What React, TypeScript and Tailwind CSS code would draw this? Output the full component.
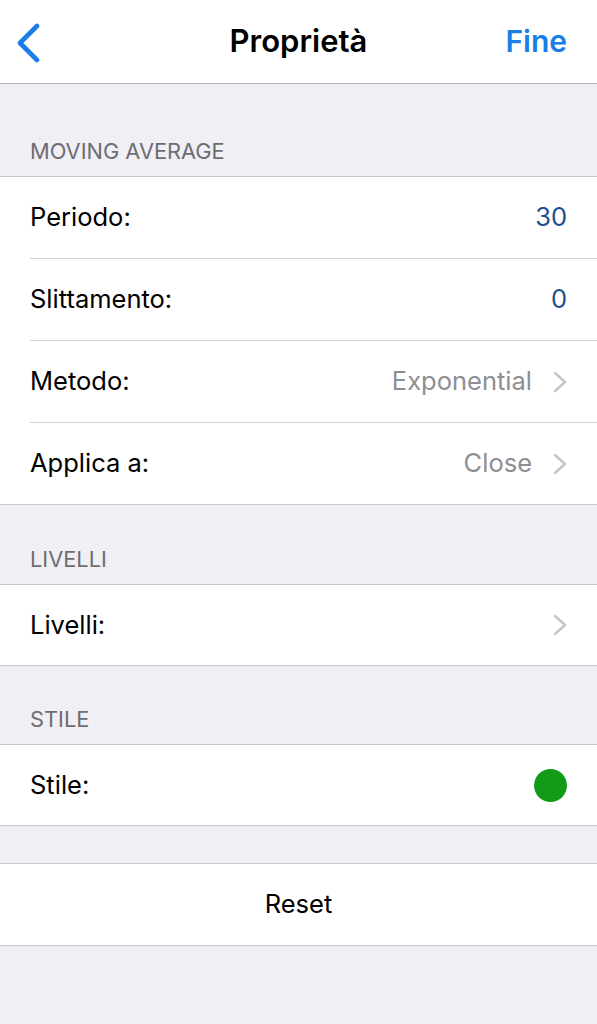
import React from "react";

const Chevron = () => (
  <svg width="14" height="22" viewBox="0 0 14 22" fill="none" className="shrink-0">
    <path d="M2 2 L12 11 L2 20" stroke="#c4c4c9" strokeWidth="2.4" strokeLinecap="round" strokeLinejoin="round" />
  </svg>
);

type RowProps = { label: string; right?: React.ReactNode; hClass: string; divider?: boolean };

const Row = ({ label, right, hClass, divider }: RowProps) => (
  <div className="pl-[30px] bg-white">
    <div
      className={`flex items-center justify-between pr-[30px] ${hClass} ${
        divider ? "border-b border-[#d1d1d6]" : ""
      }`}
    >
      <span className="text-[25.5px] text-black">{label}</span>
      {right}
    </div>
  </div>
);

const SectionHeader = ({ title, h }: { title: string; h: string }) => (
  <div className={`flex items-end pl-[30px] pb-[8px] ${h}`}>
    <span className="text-[21.8px] text-[#6d6d72]">{title}</span>
  </div>
);

const Value = ({ text }: { text: string }) => (
  <span className="text-[25.5px] text-[#1f4f8c]">{text}</span>
);

const Nav = ({ text }: { text: string }) => (
  <div className="flex items-center gap-[21px]">
    <span className="text-[25.5px] text-[#8e8e93]">{text}</span>
    <Chevron />
  </div>
);

export default function App() {
  return (
    <div
      className="w-[597px] h-[1024px] bg-[#efeff4] flex flex-col"
      style={{ fontFamily: "Inter, 'Liberation Sans', sans-serif" }}
    >
      <div className="h-[84px] shrink-0 bg-white border-b border-[#b4b4b8] flex items-center justify-between pl-[15px] pr-[30px] relative">
        <svg width="26" height="40" viewBox="0 0 26 40" fill="none" className="mt-[2px]">
          <path d="M22 3 L5 20 L22 37" stroke="#1a7ee6" strokeWidth="4.6" strokeLinecap="round" strokeLinejoin="round" />
        </svg>
        <span className="absolute left-0 right-0 text-center text-[31px] font-semibold text-black pointer-events-none">
          Proprietà
        </span>
        <span className="text-[30px] font-semibold text-[#1a7ee6]">Fine</span>
      </div>

      <SectionHeader title="MOVING AVERAGE" h="h-[92px]" />
      <div className="border-y border-[#c8c7cc] bg-white">
        <Row label="Periodo:" right={<Value text="30" />} hClass="h-[82px]" divider />
        <Row label="Slittamento:" right={<Value text="0" />} hClass="h-[82px]" divider />
        <Row label="Metodo:" right={<Nav text="Exponential" />} hClass="h-[82px]" divider />
        <Row label="Applica a:" right={<Nav text="Close" />} hClass="h-[81px]" />
      </div>

      <SectionHeader title="LIVELLI" h="h-[79px]" />
      <div className="border-y border-[#c8c7cc] bg-white">
        <Row label="Livelli:" right={<Chevron />} hClass="h-[80px]" />
      </div>

      <SectionHeader title="STILE" h="h-[78px]" />
      <div className="border-y border-[#c8c7cc] bg-white">
        <Row
          label="Stile:"
          right={<div className="w-[33px] h-[33px] rounded-full bg-[#129b17]" />}
          hClass="h-[80px]"
        />
      </div>

      <div className="h-[37px] shrink-0" />
      <div className="border-y border-[#c8c7cc] bg-white h-[83px] flex items-center justify-center">
        <span className="text-[25.5px] text-black">Reset</span>
      </div>
    </div>
  );
}
